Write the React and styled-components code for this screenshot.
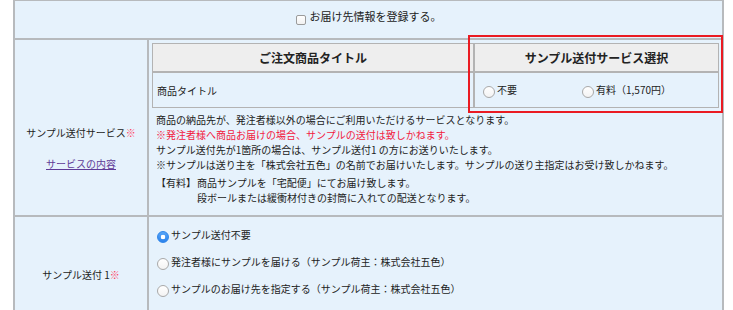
import React from 'react';
import styled, { createGlobalStyle } from 'styled-components';

const GlobalStyle = createGlobalStyle`
  html, body {
    margin: 0;
    padding: 0;
    background: #fff;
  }

  body {
    font-family: "Noto Sans CJK JP", "Noto Sans", sans-serif;
    font-size: 10px;
    color: #222;
  }
`;

const Page = styled.div`
  height: 310px;
  overflow: hidden;
  padding-left: 13px;
`;

const FormTable = styled.div`
  width: 711px;
  box-sizing: border-box;
  display: grid;
  grid-template-columns: 132px 1fr;
  gap: 2px;
  padding: 1px 2px 2px;
  background: #b7babd;
`;

const Cell = styled.div`
  background: #e6f2fc;
  line-height: 15px;
  box-sizing: border-box;
`;

const WideCell = styled(Cell)`
  grid-column: 1 / -1;
  height: 37px;
  padding-top: 8px;
  display: flex;
  justify-content: center;
  align-items: flex-start;
  font-size: 11px;
`;

const LabelCell = styled(Cell)`
  display: flex;
  flex-direction: column;
  align-items: center;
  justify-content: center;
  gap: 16px;
  padding-top: ${(p) => p.$shift || 0}px;
`;

const ContentCell = styled(Cell)`
  padding: ${(p) => p.$pad};
`;

const Mark = styled.span`
  color: #ff3d5e;
`;

const ServiceLink = styled.a`
  color: #5f3b97;
  text-decoration: underline;
`;

const Check = styled.label`
  display: flex;
  align-items: flex-start;
  gap: 4px;
`;

const CheckBox = styled.input.attrs({ type: 'checkbox' })`
  appearance: none;
  margin: 6px 0 0;
  width: 10px;
  height: 10px;
  border: 1px solid #9b9b9b;
  border-radius: 2px;
  background: linear-gradient(#fff, #f1f1f1);
  box-sizing: border-box;
`;

const Radio = styled.input.attrs({ type: 'radio' })`
  appearance: none;
  flex: none;
  margin: 4px 2px 0 0;
  width: 12px;
  height: 12px;
  border-radius: 50%;
  border: 1px solid #a9a9a9;
  background: linear-gradient(#fff, #f3f3f3);
  box-sizing: border-box;

  &:checked {
    border-color: #2f86ea;
    background: radial-gradient(circle, #fff 0 2px, transparent 2.6px),
      linear-gradient(#58a5f7, #2b82ec);
  }
`;

const Choice = styled.label`
  display: flex;
  align-items: flex-start;
  line-height: 15px;
  white-space: nowrap;
`;

const Inner = styled.div`
  position: relative;
  display: grid;
  grid-template-columns: 320px 1fr;
  grid-template-rows: 27px 34px;
  gap: 2px;
  padding: 1px;
  background: #b3b3b3;
`;

const HeadCell = styled.div`
  background: #eeeeee;
  display: flex;
  align-items: center;
  justify-content: center;
  font-size: 12px;
  font-weight: bold;
`;

const BodyCell = styled.div`
  background: #e6f2fc;
  display: flex;
  align-items: center;
  gap: 65px;
  padding: 0 ${(p) => p.$inset}px;
`;

const RedFrame = styled.div`
  position: absolute;
  left: 316px;
  right: -4px;
  top: -8px;
  bottom: -5px;
  border: 2px solid #ea1b22;
  pointer-events: none;
`;

const Notes = styled.div`
  margin: 4px 0 0 4px;
`;

const Line = styled.p`
  margin: 0;
  color: ${(p) => (p.$alert ? '#f2203f' : 'inherit')};
`;

const Paid = styled.div`
  display: grid;
  grid-template-columns: 41px 1fr;
  margin-top: 3px;
`;

const Options = styled.div`
  display: flex;
  flex-direction: column;
  gap: 11px;
  padding: 2px 0 0 5px;
`;

const options = [
  'サンプル送付不要',
  '発注者様にサンプルを届ける（サンプル荷主：株式会社五色）',
  'サンプルのお届け先を指定する（サンプル荷主：株式会社五色）',
  'サンプルのお届け先を指定する（サンプル荷主：発注者様）',
];

const App = () => {
  return (
    <Page>
      <GlobalStyle />
      <FormTable>
        <WideCell>
          <Check>
            <CheckBox />
            お届け先情報を登録する。
          </Check>
        </WideCell>

        <LabelCell $shift={40}>
          <span>
            サンプル送付サービス<Mark>※</Mark>
          </span>
          <ServiceLink href="#service">サービスの内容</ServiceLink>
        </LabelCell>
        <ContentCell $pad="3px 3px 10px 3px">
          <Inner>
            <HeadCell>ご注文商品タイトル</HeadCell>
            <HeadCell>サンプル送付サービス選択</HeadCell>
            <BodyCell $inset={4}>商品タイトル</BodyCell>
            <BodyCell $inset={8}>
              <Choice>
                <Radio name="sample" />
                不要
              </Choice>
              <Choice>
                <Radio name="sample" />
                有料（1,570円）
              </Choice>
            </BodyCell>
            <RedFrame />
          </Inner>
          <Notes>
            <Line>商品の納品先が、発注者様以外の場合にご利用いただけるサービスとなります。</Line>
            <Line $alert>※発注者様へ商品お届けの場合、サンプルの送付は致しかねます。</Line>
            <Line>サンプル送付先が1箇所の場合は、サンプル送付1 の方にお送りいたします。</Line>
            <Line>
              ※サンプルは送り主を「株式会社五色」の名前でお届けいたします。サンプルの送り主指定はお受け致しかねます。
            </Line>
            <Paid>
              <span>【有料】</span>
              <div>
                <Line>商品サンプルを「宅配便」にてお届け致します。</Line>
                <Line>段ボールまたは緩衝材付きの封筒に入れての配送となります。</Line>
              </div>
            </Paid>
          </Notes>
        </ContentCell>

        <LabelCell>
          <span>
            サンプル送付 1<Mark>※</Mark>
          </span>
        </LabelCell>
        <ContentCell $pad="8px 3px 8px 3px">
          <Options>
            {options.map((text, i) => (
              <Choice key={text}>
                <Radio name="sample1" defaultChecked={i === 0} />
                {text}
              </Choice>
            ))}
          </Options>
        </ContentCell>
      </FormTable>
    </Page>
  );
};

export default App;
